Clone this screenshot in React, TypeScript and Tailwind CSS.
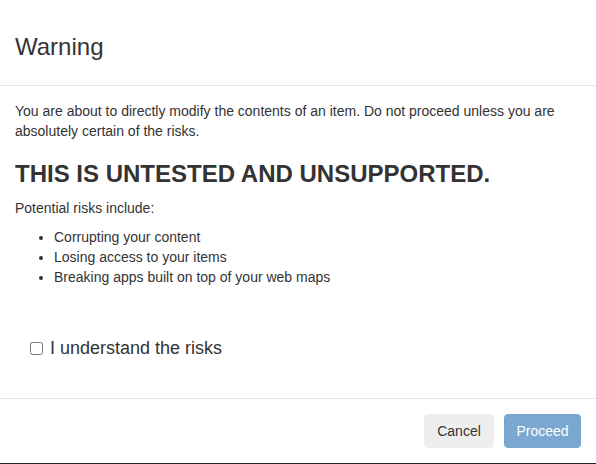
import React, { useState } from 'react';

const App: React.FC = () => {
    const [understood, setUnderstood] = useState(false);

    return (
        <div className="w-[596px] h-[464px] bg-[#222] font-['Liberation_Sans',Arial,sans-serif] text-[#333] text-[14px] leading-[20px]">
            <div className="w-[596px] h-[463px] bg-white flex flex-col">
                {/* Header */}
                <div className="h-[86px] border-b border-[#e5e5e5] px-[15px] pt-[33px]">
                    <h4 className="text-[24px] leading-[27px] font-normal">Warning</h4>
                </div>

                {/* Body */}
                <div className="flex-1 px-[15px] pt-[15px]">
                    <p className="mb-[20px]">
                        You are about to directly modify the contents of an item. Do not proceed unless you are absolutely certain of the risks.
                    </p>
                    <h3 className="text-[24px] leading-[26px] font-bold mb-[11px]">THIS IS UNTESTED AND UNSUPPORTED.</h3>
                    <p className="mb-[9px]">Potential risks include:</p>
                    <ul className="list-disc pl-[39px]">
                        <li>Corrupting your content</li>
                        <li>Losing access to your items</li>
                        <li>Breaking apps built on top of your web maps</li>
                    </ul>
                    <label className="mt-[48px] ml-[15px] flex items-center gap-[7px] text-[18px] leading-[26px] cursor-pointer w-fit">
                        <input
                            type="checkbox"
                            checked={understood}
                            onChange={() => setUnderstood(!understood)}
                            className="w-[13px] h-[13px] m-0"
                        />
                        I understand the risks
                    </label>
                </div>

                {/* Footer */}
                <div className="border-t border-[#e5e5e5] px-[15px] pt-[15px] pb-[15px] flex justify-end gap-[10px]">
                    <button className="h-[34px] w-[70px] rounded-[4px] bg-[#eeeeee] border border-[#eeeeee] text-[#333] text-[14px]">
                        Cancel
                    </button>
                    <button
                        disabled={!understood}
                        className="h-[34px] w-[77px] rounded-[4px] bg-[#7aa8d0] border border-[#76a4cc] text-white text-[14px] disabled:cursor-not-allowed"
                    >
                        Proceed
                    </button>
                </div>
            </div>
        </div>
    );
};

export default App;
